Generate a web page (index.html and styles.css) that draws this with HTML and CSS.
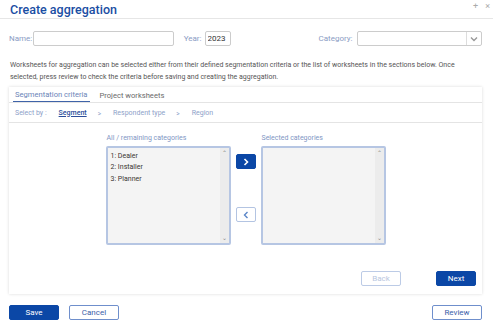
FILE: index.html
```html
<!DOCTYPE html>
<html lang="en">
<head>
  <meta charset="UTF-8">
  <title>Create aggregation</title>
  <link rel="stylesheet" href="styles.css">
</head>
<body>
  <div class="dialog">
    <div class="header">
      <h1>Create aggregation</h1>
      <div class="win-icons"><span>+</span><span>&times;</span></div>
    </div>

    <div class="fields">
      <label class="lbl">Name:</label>
      <input class="inp name" type="text">
      <label class="lbl year-lbl">Year:</label>
      <input class="inp year" type="text" value="2023">
      <label class="lbl cat-lbl">Category:</label>
      <div class="select">
        <span class="select-arrow">
          <svg width="8" height="6" viewBox="0 0 8 6"><path d="M1 1.5 L4 4.5 L7 1.5" fill="none" stroke="#999" stroke-width="1.4"/></svg>
        </span>
      </div>
    </div>

    <p class="intro">Worksheets for aggregation can be selected either from their defined segmentation criteria or the list of worksheets in the sections below. Once selected, press review to check the criteria before saving and creating the aggregation.</p>

    <div class="panel">
      <div class="tabs">
        <span class="tab active">Segmentation criteria</span>
        <span class="tab">Project worksheets</span>
      </div>
      <div class="crumbs">
        <span class="crumb-lbl">Select by :</span>
        <span class="crumb current">Segment</span>
        <span class="sep">&gt;</span>
        <span class="crumb">Respondent type</span>
        <span class="sep">&gt;</span>
        <span class="crumb">Region</span>
      </div>

      <div class="picker">
        <div class="col">
          <div class="col-title">All / remaining categories</div>
          <div class="listbox">
            <ul>
              <li>1: Dealer</li>
              <li>2: Installer</li>
              <li>3: Planner</li>
            </ul>
            <div class="scroll"><span>&#8963;</span><span>&#8964;</span></div>
          </div>
        </div>
        <div class="moves">
          <button class="mv fill">
            <svg width="6" height="8" viewBox="0 0 6 8"><path d="M1.5 1 L4.5 4 L1.5 7" fill="none" stroke="#fff" stroke-width="1.6"/></svg>
          </button>
          <button class="mv ghost">
            <svg width="6" height="8" viewBox="0 0 6 8"><path d="M4.5 1 L1.5 4 L4.5 7" fill="none" stroke="#5b86c8" stroke-width="1.4"/></svg>
          </button>
        </div>
        <div class="col">
          <div class="col-title">Selected categories</div>
          <div class="listbox">
            <ul></ul>
            <div class="scroll"><span>&#8963;</span><span>&#8964;</span></div>
          </div>
        </div>
      </div>

      <div class="steps">
        <button class="btn outline disabled">Back</button>
        <button class="btn primary">Next</button>
      </div>
    </div>

    <div class="footer">
      <button class="btn primary">Save</button>
      <button class="btn outline">Cancel</button>
      <button class="btn outline right">Review</button>
    </div>
  </div>
</body>
</html>
```

FILE: styles.css
```css
body {
  margin: 0;
  background: #fff;
  font-family: Roboto, "Liberation Sans", sans-serif;
  color: #444;
}
.dialog {
  width: 493px;
  height: 330px;
  box-sizing: border-box;
  padding: 0 11px 0 9px;
}
.header {
  display: flex;
  justify-content: space-between;
  align-items: flex-start;
  border-bottom: 1px solid #e6e6e6;
  margin: 0 -11px 0 -9px;
  padding: 0 3px 0 10px;
  height: 18px;
}
h1 {
  margin: 0;
  font-size: 12.5px;
  font-weight: 500;
  color: #1a4ea3;
  line-height: 19px;
}
.win-icons {
  display: flex;
  gap: 7px;
  font-size: 9px;
  color: #aaa;
  line-height: 10px;
  margin-top: 1px;
}

/* form row */
.fields {
  display: flex;
  align-items: center;
  margin-top: 12px;
  height: 15px;
}
.lbl {
  font-size: 8px;
  color: #8a9cc4;
}
.inp {
  box-sizing: border-box;
  height: 15px;
  border: 1px solid #ccc;
  border-radius: 2px;
  padding: 0 2px;
  font-family: Roboto, sans-serif;
  font-size: 8px;
  color: #333;
}
.name {
  width: 141px;
  margin-left: 1px;
}
.year-lbl {
  margin-left: 10px;
}
.year {
  width: 26px;
  margin-left: 3px;
}
.cat-lbl {
  margin-left: 88px;
}
.select {
  box-sizing: border-box;
  width: 126px;
  height: 15px;
  margin-left: 4px;
  border: 1px solid #ccc;
  border-radius: 2px;
  display: flex;
  justify-content: flex-end;
}
.select-arrow {
  width: 14px;
  border-left: 1px solid #ddd;
  display: flex;
  align-items: center;
  justify-content: center;
}

.intro {
  margin: 14px 0 0 1px;
  font-size: 7px;
  line-height: 11.5px;
  color: #555;
}

/* criteria panel */
.panel {
  margin-top: 4px;
  height: 207px;
  box-shadow: 0 0 3px rgba(0,0,0,0.15);
  display: flex;
  flex-direction: column;
}
.tabs {
  display: flex;
  gap: 10px;
  padding: 0 0 0 6px;
  height: 15px;
  border-bottom: 1px solid #e4e4e4;
  align-items: flex-end;
}
.tab {
  font-size: 7.6px;
  color: #6a6a6a;
  padding-bottom: 2px;
}
.tab.active {
  color: #6b84b8;
  border-bottom: 1px solid #3f63a8;
  padding: 0 2px 2px;
  margin-left: -2px;
}
.crumbs {
  display: flex;
  align-items: center;
  height: 19px;
  padding-left: 6px;
  border-bottom: 1px solid #e4e4e4;
  font-size: 7px;
  color: #8ea1c9;
}
.crumb-lbl {
  margin-right: 12px;
}
.crumb.current {
  color: #2a4e9a;
  text-decoration: underline;
  font-weight: 500;
}
.sep {
  font-size: 6.5px;
  margin: 2px 12px 0 11px;
}

.picker {
  display: flex;
  justify-content: center;
  gap: 5px;
  margin-top: 11px;
}
.col-title {
  font-size: 7px;
  color: #7f96c4;
  margin-left: 1px;
  height: 12px;
  line-height: 8px;
}
.listbox {
  box-sizing: border-box;
  width: 125px;
  height: 99px;
  border: 2px solid #b6c6e3;
  border-radius: 2px;
  background: #f4f4f4;
  display: flex;
}
.listbox ul {
  flex: 1;
  list-style: none;
  margin: 0;
  padding: 3px 3px;
  font-size: 7px;
  line-height: 11.3px;
  color: #3a3632;
}
.scroll {
  width: 9px;
  background: #ececec;
  display: flex;
  flex-direction: column;
  justify-content: space-between;
  align-items: center;
  font-size: 6px;
  color: #888;
  line-height: 8px;
  padding: 1px 0;
}
.moves {
  display: flex;
  flex-direction: column;
  gap: 38px;
  padding-top: 20px;
}
.mv {
  box-sizing: border-box;
  width: 20px;
  height: 15px;
  border-radius: 2px;
  padding: 0;
  display: flex;
  align-items: center;
  justify-content: center;
}
.mv.fill {
  background: #0b47a6;
  border: 1px solid #0b47a6;
}
.mv.ghost {
  background: #fff;
  border: 1px solid #b3c4e2;
}

.steps {
  margin-top: auto;
  display: flex;
  justify-content: flex-end;
  gap: 35px;
  padding: 0 6px 8px 0;
}

/* buttons */
.btn {
  box-sizing: border-box;
  width: 50px;
  height: 15px;
  border-radius: 2px;
  font-family: Roboto, sans-serif;
  font-size: 8px;
  padding: 0;
}
.btn.primary {
  background: #0b47a6;
  border: 1px solid #0b47a6;
  color: #fff;
}
.btn.outline {
  background: #fff;
  border: 1px solid #6f8fcc;
  color: #3a5ea8;
}
.steps .btn {
  width: 40px;
}
.btn.disabled {
  border-color: #bccbe6;
  color: #b8c6e0;
}

.footer {
  display: flex;
  gap: 10px;
  margin-top: 11px;
}
.footer .right {
  margin-left: auto;
}
```
